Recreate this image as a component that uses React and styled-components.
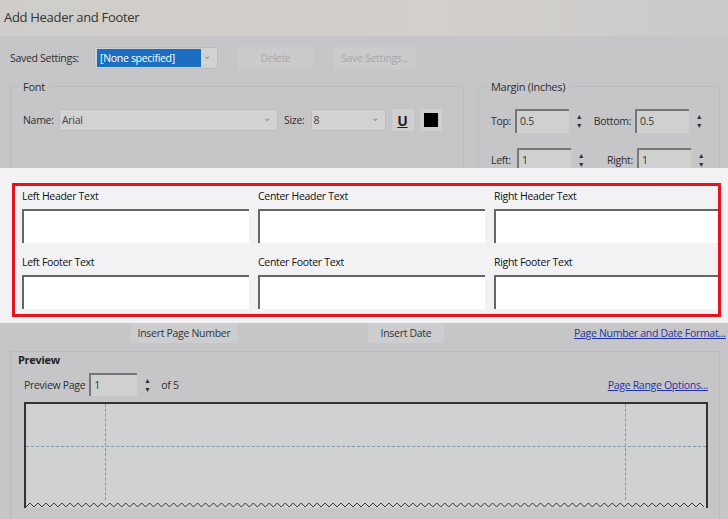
import React from 'react'
import styled, { createGlobalStyle } from 'styled-components'

const Global = createGlobalStyle`
  body { margin: 0; background: #c6c6c8; font-family: "Open Sans", "Liberation Sans", sans-serif; }
  * { box-sizing: border-box; }
`

const Page = styled.div`
  width: 728px;
  height: 519px;
  overflow: hidden;
  background: #c6c6c8;
  color: #2e2e2e;
  font-size: 10.5px;
  letter-spacing: -0.3px;
`
const TitleBar = styled.div`
  height: 36px;
  padding: 8px 0 0 4px;
  font-size: 13px;
  color: #333;
  background: linear-gradient(90deg, #cfcdca, #d3cfca 60%, #cacaca);
`
const Top = styled.div`
  height: 132px;
  overflow: hidden;
  padding: 11px 8px 0 10px;
`
const Row = styled.div`
  display: flex;
  align-items: center;
  gap: ${({ gap }) => gap || 8}px;
`
const Select = styled.div`
  width: ${({ w }) => w}px;
  height: 22px;
  background: #d2d2d2;
  border: 1px solid #bdbdbd;
  display: flex;
  align-items: center;
  justify-content: space-between;
  padding: 0 6px 0 2px;
  color: #444;
  &::after { content: "⌄"; color: #888; font-size: 10px; margin-top: -6px; }
`
const Selected = styled.span`
  background: #1c6fc0;
  color: #fff;
  padding: 2px 3px;
  width: 104px;
`
const Btn = styled.div`
  width: ${({ w }) => w}px;
  height: ${({ h }) => h || 22}px;
  background: ${({ bg }) => bg || '#cdcdcf'};
  color: ${({ dim }) => dim ? '#a8a8a8' : '#333'};
  display: flex;
  align-items: center;
  justify-content: center;
  border-radius: 2px;
`
const Groups = styled.div`
  display: flex;
  gap: 14px;
  margin-top: 10px;
`
const Group = styled.fieldset`
  margin: 0;
  width: ${({ w }) => w}px;
  border: 1px solid #bcbcbc;
  border-radius: 2px;
  padding: 6px 12px 8px;
  legend { padding: 0 5px; margin-left: -5px; font-size: 11px; }
`
const Label = styled.span`
  width: ${({ w }) => w ? w + 'px' : 'auto'};
  text-align: ${({ right }) => right ? 'right' : 'left'};
  flex-shrink: 0;
`
const Field = styled.div`
  width: ${({ w }) => w}px;
  height: ${({ h }) => h || 24}px;
  background: #d0d0d0;
  border-top: 2px solid #777;
  border-left: 2px solid #777;
  padding: 3px;
  color: #333;
`
const Spin = styled.div`
  width: 12px;
  display: flex;
  flex-direction: column;
  font-size: 7px;
  line-height: 9px;
  color: #333;
  text-align: center;
`
const ULetter = styled.div`
  width: 22px; height: 22px; background: #cfcfcf;
  display: flex; align-items: center; justify-content: center;
  font-weight: 700; font-size: 14px; text-decoration: underline; color: #222;
`
const Swatch = styled.div`
  width: 22px; height: 22px; background: #cfcfcf;
  display: flex; align-items: center; justify-content: center;
  &::after { content: ""; width: 14px; height: 14px; background: #000; }
`
const Link = styled.span`
  color: #2233aa;
  text-decoration: underline;
`
const Band = styled.div`
  height: 155px;
  background: #f2f2f4;
  padding: 15px 8px 0 12px;
`
const RedBox = styled.div`
  width: 709px;
  height: 134px;
  border: 3px solid #e8121c;
  padding: 3px 0 0 7px;
  display: grid;
  grid-template-columns: repeat(3, 236px);
  row-gap: 6px;
  overflow: hidden;
`
const Cell = styled.div`
  display: flex;
  flex-direction: column;
  gap: 6px;
  font-size: 10.5px;
  color: #111;
`
const TextArea = styled.div`
  width: 227px;
  height: 34px;
  background: #fff;
  border-top: 2px solid #666;
  border-left: 2px solid #666;
`
const InsertRow = styled.div`
  height: 24px;
  display: flex;
  align-items: flex-start;
  padding-left: 130px;
`
const Preview = styled.div`
  margin: 4px 8px 0 10px;
  border: 1px solid #bcbcbc;
  border-bottom: none;
  padding: 0 11px 0 13px;
  height: 200px;
`
const PreviewTitle = styled.div`
  font-weight: 700;
  margin: 0 0 6px -6px;
  font-size: 11px;
  color: #222;
`
const Sheet = styled.div`
  margin-top: 6px;
  height: 106px;
  border: 2px solid #333;
  border-bottom: none;
  background: #d0d1d1;
  display: grid;
  grid-template-columns: 80px 1fr 80px;
  grid-template-rows: 43px 1fr 8px;
`
const VLine = styled.div`
  grid-row: 1 / 3;
  grid-column: ${({ col }) => col};
  border-right: 1px dashed #8a93ad;
`
const HLine = styled.div`
  grid-row: 1;
  grid-column: 1 / 4;
  border-bottom: 1px dashed #8a93ad;
`
const Zig = styled.svg`
  grid-row: 3;
  grid-column: 1 / 4;
  width: 100%;
  height: 8px;
`

const Spinner = () => <Spin><span>▲</span><span>▼</span></Spin>

const cols = ['Left', 'Center', 'Right']

export default function App() {
  return (
    <Page>
      <Global />
      <TitleBar>Add Header and Footer</TitleBar>
      <Top>
        <Row gap={0}>
          <Label w={76}>Saved Settings:</Label>
          <Select w={124}><Selected>[None specified]</Selected></Select>
          <Btn w={75} dim bg="#cbcbcd" style={{ marginLeft: 12 }}>Delete</Btn>
          <Btn w={82} dim bg="#cbcbcd" style={{ marginLeft: 13 }}>Save Settings...</Btn>
        </Row>
        <Groups>
          <Group w={454}>
            <legend>Font</legend>
            <Row gap={6} style={{ marginTop: 9 }}>
              <Label w={30} right>Name:</Label>
              <Select w={219}>Arial</Select>
              <Label>Size:</Label>
              <Select w={75}>8</Select>
              <ULetter>U</ULetter>
              <Swatch />
            </Row>
          </Group>
          <Group w={242}>
            <legend>Margin (Inches)</legend>
            <Row gap={4} style={{ marginTop: 9 }}>
              <Label>Top:</Label>
              <Field w={54}>0.5</Field>
              <Spinner />
              <Label w={40} right style={{ marginLeft: 2 }}>Bottom:</Label>
              <Field w={54}>0.5</Field>
              <Spinner />
            </Row>
            <Row gap={4} style={{ marginTop: 15 }}>
              <Label w={22}>Left:</Label>
              <Field w={54}>1</Field>
              <Spinner />
              <Label w={40} right style={{ marginLeft: 2 }}>Right:</Label>
              <Field w={54}>1</Field>
              <Spinner />
            </Row>
          </Group>
        </Groups>
        <div style={{ marginTop: 8 }}><Link>Appearance Options...</Link></div>
      </Top>
      <Band>
        <RedBox>
          {['Header', 'Footer'].map(k => cols.map(c => (
            <Cell key={c + k}>
              <span>{c} {k} Text</span>
              <TextArea />
            </Cell>
          )))}
        </RedBox>
      </Band>
      <InsertRow>
        <Btn w={108} h={20}>Insert Page Number</Btn>
        <Btn w={76} h={20} style={{ marginLeft: 130 }}>Insert Date</Btn>
        <Link style={{ marginLeft: 130, marginTop: 3 }}>Page Number and Date Format...</Link>
      </InsertRow>
      <Preview>
        <PreviewTitle>Preview</PreviewTitle>
        <Row gap={4}>
          <Label>Preview Page</Label>
          <Field w={48} h={23}>1</Field>
          <Spinner />
          <Label style={{ marginLeft: 4 }}>of 5</Label>
          <Link style={{ marginLeft: 'auto' }}>Page Range Options...</Link>
        </Row>
        <Sheet>
          <HLine />
          <VLine col={1} />
          <VLine col={2} />
          <Zig viewBox="0 0 682 8" preserveAspectRatio="none">
            <polyline
              fill="none" stroke="#333" strokeWidth="1"
              points={Array.from({ length: 171 }, (_, i) => `${i * 4},${i % 2 ? 3 : 7}`).join(' ')}
            />
          </Zig>
        </Sheet>
      </Preview>
    </Page>
  )
}
